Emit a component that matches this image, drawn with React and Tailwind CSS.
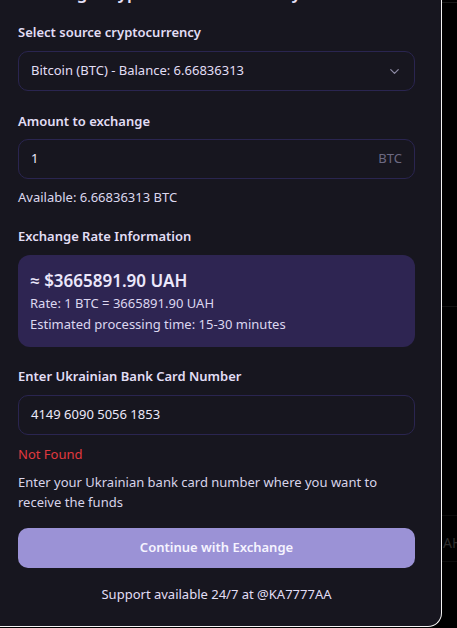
import React from "react";
import { ChevronDown } from "lucide-react";

export default function App() {
  return (
    <div className="w-[457px] h-[628px] bg-black flex overflow-hidden" style={{ fontFamily: '"Noto Sans", "Open Sans", sans-serif' }}>
      <div className="w-[442px] h-[627px] shrink-0 bg-[#17161f] border-r border-b border-[#f4f4f4] rounded-br-[14px] overflow-hidden pl-[18px] pr-[26px] flex flex-col">
        <div className="h-[3px] overflow-hidden">
          <div className="-mt-[18px] text-[17px] leading-[21px] font-semibold text-[#e4e0f7] whitespace-nowrap">
            Exchange crypto for Ukrainian hryvnia
          </div>
        </div>
        <div className="mt-[19px] text-[13px] leading-5 font-semibold text-[#e2def5]">Select source cryptocurrency</div>
        <div className="mt-[9px] h-10 rounded-[10px] border border-[#2a2550] bg-[#17161f] flex items-center justify-between pl-[12px] pr-[12px]">
          <span className="text-[13px] text-[#e2def5]">Bitcoin (BTC) - Balance: 6.66836313</span>
          <ChevronDown size={15} strokeWidth={2} className="text-[#8c89a3]" />
        </div>

        <div className="mt-[20px] text-[13px] leading-5 font-semibold text-[#e2def5]">Amount to exchange</div>
        <div className="mt-[8px] h-10 rounded-[10px] border border-[#2a2550] flex items-center justify-between pl-[12px] pr-[12px]">
          <span className="text-[13px] text-[#ece9fa]">1</span>
          <span className="text-[13px] text-[#6c6982]">BTC</span>
        </div>
        <div className="mt-[8px] text-[13px] leading-5 text-[#dcd8ee]">Available: 6.66836313 BTC</div>

        <div className="mt-[19px] text-[13px] leading-5 font-semibold text-[#e2def5]">Exchange Rate Information</div>
        <div className="mt-[9px] h-[92px] rounded-[12px] bg-[#2e2552] px-[12px] pt-[14px]">
          <div className="text-[17px] leading-6 font-semibold text-[#ebe7fb]">≈ $3665891.90 UAH</div>
          <div className="text-[13px] leading-[21px] text-[#dcd7f0]">Rate: 1 BTC = 3665891.90 UAH</div>
          <div className="text-[13px] leading-[21px] text-[#dcd7f0]">Estimated processing time: 15-30 minutes</div>
        </div>

        <div className="mt-[19px] text-[13px] leading-5 font-semibold text-[#e2def5]">Enter Ukrainian Bank Card Number</div>
        <div className="mt-[9px] h-10 rounded-[10px] border border-[#2a2550] flex items-center pl-[12px]">
          <span className="text-[13px] text-[#ece9fa]">4149 6090 5056 1853</span>
        </div>
        <div className="mt-[9px] text-[13px] leading-5 text-[#e0393e]">Not Found</div>
        <div className="mt-[8px] text-[13px] leading-5 text-[#d8d4ea]">
          Enter your Ukrainian bank card number where you want to receive the funds
        </div>

        <button className="mt-[16px] h-10 w-full rounded-[10px] bg-[#9b92d6] text-[13px] font-semibold text-[#f6f4ff]">
          Continue with Exchange
        </button>
        <div className="mt-[16px] text-center text-[13px] leading-5 text-[#e2def5]">Support available 24/7 at @KA7777AA</div>
      </div>
      <div className="flex-1 flex flex-col">
        <div className="mt-[2px] h-px bg-[#1a1a1a]" />
        <div className="mt-[303px] h-px bg-[#121212]" />
        <div className="mt-[208px] h-px bg-[#0d0d0d]" />
        <div className="mt-[17px] text-[14px] leading-5 text-[#2e2e2e] whitespace-nowrap pl-[1px]">AH</div>
        <div className="mt-[8px] h-px bg-[#0d0d0d]" />
      </div>
    </div>
  );
}
